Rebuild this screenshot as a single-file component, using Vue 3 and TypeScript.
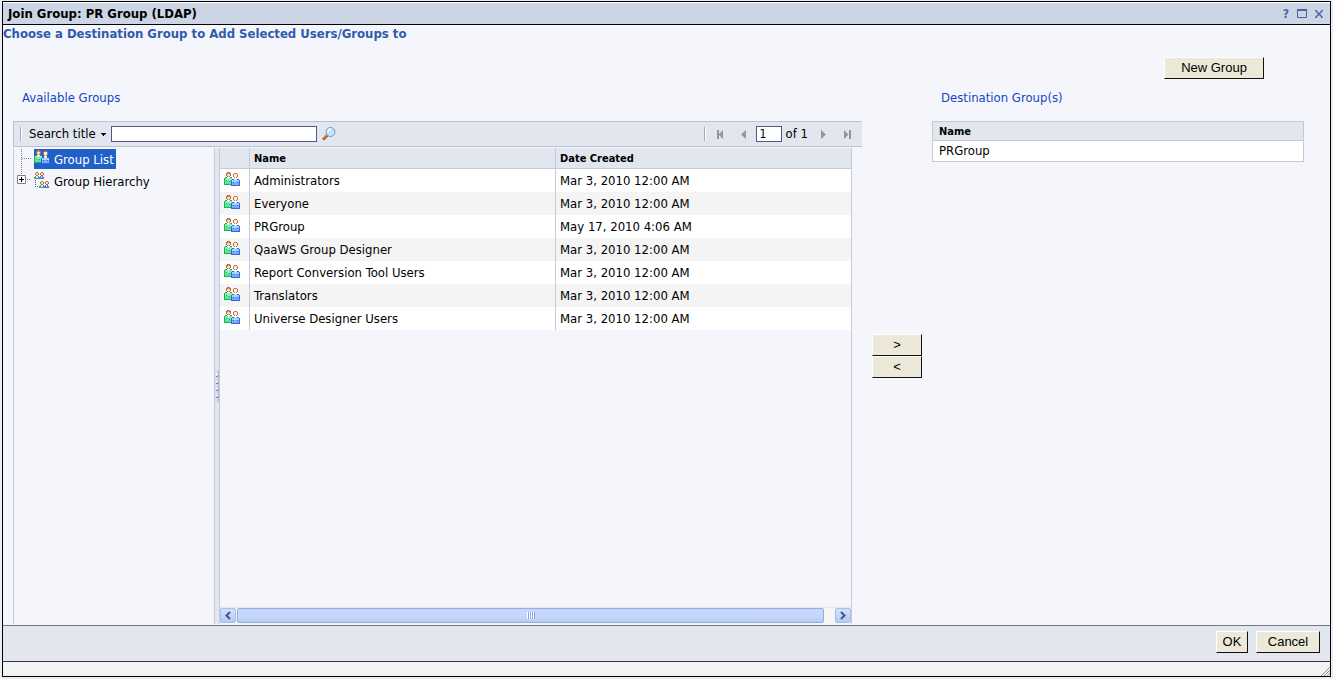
<script setup lang="ts">
import { ref } from 'vue'

interface GroupRow {
  name: string
  created: string
}

const groups: GroupRow[] = [
  { name: 'Administrators', created: 'Mar 3, 2010 12:00 AM' },
  { name: 'Everyone', created: 'Mar 3, 2010 12:00 AM' },
  { name: 'PRGroup', created: 'May 17, 2010 4:06 AM' },
  { name: 'QaaWS Group Designer', created: 'Mar 3, 2010 12:00 AM' },
  { name: 'Report Conversion Tool Users', created: 'Mar 3, 2010 12:00 AM' },
  { name: 'Translators', created: 'Mar 3, 2010 12:00 AM' },
  { name: 'Universe Designer Users', created: 'Mar 3, 2010 12:00 AM' },
]
const destinations = ref<string[]>(['PRGroup'])
const search = ref('')
const page = ref('1')
</script>

<template>
  <div class="screen">
    <svg class="sprites" width="0" height="0" aria-hidden="true">
      <symbol id="people" viewBox="0 0 16 14">
        <g shape-rendering="crispEdges">
          <path d="M1 6h7v7h-8v-6h1z" fill="#8cecb4" />
          <path d="M1 9h6v3h-6z" fill="#66e096" />
          <path d="M1 5h2v1h-2zM6 5h2v1h-2zM0 6h1v7h-1zM0 12h8v1h-8zM5 9h1v1h-1zM2 8h1v1h-1z" fill="#18b25a" />
          <path d="M3 5h3v1h-1v1h-1v-1h-1z" fill="#fff" />
          <path d="M3 0h3v1h1v3h-1v1h-3v-1h-1v-3h1z" fill="#bd6a48" />
          <path d="M3 2h3v2h-1v1h-1v-1h-1z" fill="#fbd3bd" />
          <path d="M4 1h1v1h-1z" fill="#f0b08e" />
          <path d="M8 7h7v1h1v6h-9v-6h1z" fill="#a9d2ff" />
          <path d="M8 10h7v3h-7z" fill="#74adfb" />
          <path d="M8 7h2v1h-2zM13 7h2v1h-2zM7 8h1v6h-1zM15 8h1v6h-1zM7 13h9v1h-9zM9 10h1v1h-1zM13 10h1v1h-1z" fill="#3765e0" />
          <path d="M10 6h3v1h-1v1h-1v-1h-1z" fill="#fff" />
          <path d="M10 1h3v1h1v3h-1v1h-3v-1h-1v-3h1z" fill="#c4714c" />
          <path d="M10 2h3v3h-1v1h-1v-1h-1z" fill="#fdeadb" />
        </g>
      </symbol>
      <symbol id="hierarchy" viewBox="0 0 16 16">
        <g shape-rendering="crispEdges">
          <g id="pair">
            <path d="M2 0h2v1h1v2h-1v1h-2v-1h-1v-2h1zM7 0h2v1h1v2h-1v1h-2v-1h-1v-2h1z" fill="#c06a48" />
            <path d="M2 1h2v2h-2zM7 1h2v2h-2z" fill="#fbdccb" />
            <path d="M1 4h4v1h1v2h-6v-2h1z" fill="#4f9f7c" />
            <path d="M6 4h3v1h1v2h-5v-2h1z" fill="#4a78e0" />
            <path d="M2 4h2v2h-2z" fill="#d3f3de" />
            <path d="M7 4h1v2h-1z" fill="#d4e6ff" />
          </g>
          <use href="#pair" x="5" y="9" />
          <path d="M1 8h1v1h-1zM1 10h1v1h-1zM1 12h1v1h-1zM1 14h1v1h-1zM3 14h1v1h-1z" fill="#3b5fa8" />
        </g>
      </symbol>
    </svg>

    <section class="dialog" role="dialog" aria-labelledby="dialog-title">
      <header class="titlebar">
        <h1 id="dialog-title">Join Group: PR Group (LDAP)</h1>
        <button class="tool" type="button" aria-label="Help">?</button>
        <button class="tool" type="button" aria-label="Maximize">
          <svg width="10" height="9"><path d="M0.500 1v7.500h9v-7.500" fill="none" stroke="#4b62a5" /><path d="M0 1h10" stroke="#4b62a5" stroke-width="2" /></svg>
        </button>
        <button class="tool" type="button" aria-label="Close">
          <svg width="8" height="8"><path d="M1 1l6 6M7 1l-6 6" stroke="#4b62a5" stroke-width="1.500" /><path d="M0 .5h2M6 .5h2M0 7.500h2M6 7.500h2" stroke="#4b62a5" /></svg>
        </button>
      </header>

      <main class="content">
        <h2>Choose a Destination Group to Add Selected Users/Groups to</h2>
        <div class="columns">
          <section class="available">
            <h3>Available Groups</h3>
            <div class="toolbar">
              <span class="grip"></span>
              <button class="search-by" type="button">Search title
                <svg width="5" height="3"><path d="M0 0h5v1h-1v1h-1v1h-1v-1h-1v-1h-1z" /></svg>
              </button>
              <input v-model="search" class="search" type="text" aria-label="Search title" />
              <button class="go" type="button" aria-label="Search">
                <svg width="14" height="14">
                  <path d="M1 12.500l4.500-4.500" stroke="#a85a22" stroke-width="3" />
                  <path d="M1 11.500l4-4" stroke="#f2b26a" stroke-width="1" />
                  <circle cx="8.500" cy="5" r="4.500" fill="#bfe6ff" stroke="#7793c8" />
                  <path d="M6 5.500a3 3 0 0 1 3-3.500" stroke="#fff" stroke-width="1.500" fill="none" />
                </svg>
              </button>
              <span class="grip push"></span>
              <button class="nav first" type="button" aria-label="First page">
                <svg width="7" height="9"><path d="M0 0h2v9h-2zM6 0v9l-4.500-4.500z" /></svg>
              </button>
              <button class="nav prev" type="button" aria-label="Previous page">
                <svg width="5" height="9"><path d="M5 0v9l-5-4.500z" /></svg>
              </button>
              <input id="page" v-model="page" class="page" type="text" />
              <label class="of" for="page">of 1</label>
              <button class="nav next" type="button" aria-label="Next page">
                <svg width="5" height="9"><path d="M0 0v9l5-4.500z" /></svg>
              </button>
              <button class="nav last" type="button" aria-label="Last page">
                <svg width="7" height="9"><path d="M0 0v9l4.500-4.500zM5 0h2v9h-2z" /></svg>
              </button>
            </div>

            <div class="panes">
              <ul class="tree">
                <li>
                  <span class="branch">
                    <svg width="20" height="22"><path d="M7.500 0v22M8 9.500h9" fill="none" stroke="#808080" stroke-dasharray="1 1" /></svg>
                  </span>
                  <a class="node selected" href="#list"><svg width="16" height="14"><use href="#people" /></svg><span>Group List</span></a>
                </li>
                <li>
                  <button class="branch" type="button" aria-label="Expand Group Hierarchy">
                    <svg width="20" height="22"><path d="M7.500 0v5M13 8.500h4" stroke="#808080" stroke-dasharray="1 1" /><path d="M3.500 4.500h8v8h-8z" fill="#fff" stroke="#808080" /><path d="M5 8.500h5M7.500 6v5" stroke="#000" /></svg>
                  </button>
                  <a class="node" href="#hierarchy-view"><svg width="16" height="16"><use href="#hierarchy" /></svg><span>Group Hierarchy</span></a>
                </li>
              </ul>
              <div class="splitter">
                <svg width="4" height="32"><path d="M0 0h3v32h-3z" fill="#d3ddec" /><path d="M3 0h1v32h-1z" fill="#b4bdd3" /><path d="M1 5h2M1 12h2M1 19h2M1 26h2" stroke="#fff" stroke-width="2" /><path d="M1 6.500h2M2 5.500h1M1 13.500h2M2 12.500h1M1 20.500h2M2 19.500h1M1 27.500h2M2 26.500h1" stroke="#7888a8" /></svg>
              </div>
              <div class="list">
                <table class="groups">
                  <thead>
                    <tr><th class="c-icon"></th><th class="c-name">Name</th><th>Date Created</th></tr>
                  </thead>
                  <tbody>
                    <tr v-for="g in groups" :key="g.name">
                      <td class="c-icon"><svg width="16" height="14"><use href="#people" /></svg></td>
                      <td>{{ g.name }}</td>
                      <td>{{ g.created }}</td>
                    </tr>
                  </tbody>
                </table>
                <div class="hscroll">
                  <button type="button" aria-label="Scroll left"><svg width="6" height="9"><path d="M5 1l-3.500 3.500 3.500 3.500" fill="none" stroke="#44597f" stroke-width="2" /></svg></button>
                  <div class="thumb"><i></i><i></i><i></i><i></i></div>
                  <button type="button" aria-label="Scroll right"><svg width="6" height="9"><path d="M1 1l3.500 3.500-3.500 3.500" fill="none" stroke="#44597f" stroke-width="2" /></svg></button>
                </div>
              </div>
            </div>
          </section>

          <div class="movers">
            <button class="btn" type="button" aria-label="Add">&gt;</button>
            <button class="btn" type="button" aria-label="Remove">&lt;</button>
          </div>

          <section class="destination">
            <button class="btn new-group" type="button">New Group</button>
            <h3>Destination Group(s)</h3>
            <table class="dest">
              <thead><tr><th>Name</th></tr></thead>
              <tbody><tr v-for="d in destinations" :key="d"><td>{{ d }}</td></tr></tbody>
            </table>
          </section>
        </div>
      </main>

      <footer class="actions">
        <button class="btn ok" type="button">OK</button>
        <button class="btn cancel" type="button">Cancel</button>
      </footer>
      <div class="status">
        <svg width="9" height="9"><path d="M0 9l9-9M3 9l6-6M6 9l3-3" stroke="#8f8f8f" /></svg>
      </div>
    </section>
  </div>
</template>

<style>
body {
  background: #e9eef5;
}
</style>

<style scoped>
* {
  box-sizing: border-box;
}
.screen {
  height: 100vh;
  padding: 1px 2px 2px;
  font: 13px/18px "DejaVu Sans Condensed", "Noto Sans", sans-serif;
  color: #000;
}
.sprites {
  position: absolute;
}
svg {
  display: block;
}
button {
  font: inherit;
  color: inherit;
  padding: 0;
  border: 0;
  background: none;
}
h1,
h2,
h3 {
  margin: 0;
  font-size: 13px;
  line-height: 18px;
}
.dialog {
  height: 100%;
  display: flex;
  flex-direction: column;
  border: 1px solid #000;
  background: #f4f6fb;
}
.titlebar {
  height: 23px;
  flex: none;
  display: flex;
  align-items: center;
  gap: 8px;
  padding: 0 7px 0 5px;
  background: #cbd5e3;
  border-top: 1px solid #fff;
  border-bottom: 1px solid #000;
}
h1 {
  flex: 1;
}
.tool {
  color: #4b62a5;
  font-weight: bold;
  font-size: 12px;
}
.content {
  flex: 1;
  min-height: 0;
  display: flex;
  flex-direction: column;
}
h2 {
  color: #2f5bab;
}
h3 {
  padding-left: 9px;
  margin-bottom: 14px;
  font-weight: normal;
  color: #1545c8;
}
.columns {
  flex: 1;
  min-height: 0;
  display: flex;
  padding: 0 26px 0 10px;
}
.available {
  flex: 1;
  min-width: 0;
  display: flex;
  flex-direction: column;
  padding-top: 46px;
}
.toolbar {
  height: 26px;
  flex: none;
  display: flex;
  align-items: center;
  padding: 0 11px 0 6px;
  background: #e2e7ef;
  border: 1px solid #bcc0d4;
  border-right: 0;
}
.grip {
  width: 2px;
  height: 14px;
  background: #9ba5c6;
  border-right: 1px solid #fff;
}
.push {
  margin-left: auto;
}
.search-by {
  display: flex;
  align-items: center;
  gap: 5px;
  margin: 0 5px 0 7px;
}
.search,
.page {
  height: 16px;
  padding: 0 3px;
  font: inherit;
  font-size: 12px;
  line-height: 14px;
  background: #fff;
  border: 1px solid #545680;
  border-radius: 0;
}
.search {
  width: 206px;
}
.go {
  margin-left: 5px;
}
.page {
  width: 26px;
  margin-left: 10px;
}
.of {
  margin: 0 13px 0 4px;
}
.nav {
  fill: #969696;
}
.first {
  margin: 0 17px 0 11px;
}
.last {
  margin-left: 18px;
}
.panes {
  flex: 1;
  min-height: 0;
  display: flex;
  padding: 1px 10px 1px 0;
}
.tree {
  width: 202px;
  margin: 0;
  padding: 0;
  list-style: none;
  border-left: 1px solid #c8c9d6;
  border-right: 1px solid #c8c9d6;
}
.tree li {
  display: flex;
  align-items: flex-start;
  height: 22px;
}
.branch {
  width: 20px;
  margin-top: 1px;
}
.node {
  display: flex;
  align-items: flex-start;
  height: 20px;
  margin-top: 1px;
  padding-right: 2px;
  color: inherit;
  text-decoration: none;
}
.node svg {
  margin: 1px 4px 0 0;
}
.node span {
  margin-top: 2px;
}
.selected {
  background: #2061c9;
  color: #fff;
}
.splitter {
  width: 4px;
  display: flex;
  align-items: center;
  background: #e2e7ef;
}
.list {
  flex: 1;
  min-width: 0;
  display: flex;
  flex-direction: column;
  justify-content: space-between;
  border: solid #c8c9d9;
  border-width: 0 1px;
}
table {
  width: 100%;
  border-collapse: separate;
  border-spacing: 0;
  table-layout: fixed;
}
th,
td {
  padding: 0 4px;
  text-align: left;
}
th {
  font-size: 11px;
}
.groups th {
  height: 21px;
  padding-top: 2px;
  background: #e2e7ef;
  border-bottom: 1px solid #c8c9d9;
}
.groups td {
  height: 23px;
  padding-top: 1px;
}
.groups th + th,
.groups td + td {
  border-left: 1px solid #c8c9d9;
}
.groups tbody tr {
  background: #fff;
}
.groups tbody tr:nth-child(even) {
  background: #f4f4f4;
}
.c-icon {
  width: 29px;
}
td.c-icon svg {
  margin-top: -4px;
}
.c-name {
  width: 306px;
}
.hscroll {
  height: 17px;
  flex: none;
  display: flex;
  gap: 1px;
  background: #f7f6f2;
  border-top: 1px solid #ece9df;
}
.hscroll button {
  width: 16px;
  height: 15px;
  display: grid;
  place-items: center;
  background: linear-gradient(#d3e0fd, #b3caf6);
  border: 1px solid #a4bfeb;
  border-radius: 2px;
}
.thumb {
  flex: 1;
  height: 15px;
  margin-right: 10px;
  display: flex;
  align-items: center;
  justify-content: center;
  background: linear-gradient(#c6d6fd 60%, #b7cbf8);
  border: 1px solid #90aede;
  border-radius: 2px;
}
.thumb i {
  width: 2px;
  height: 7px;
  background: #8ba5df;
  border-left: 1px solid #fff;
}
.movers {
  width: 70px;
  flex: none;
  display: flex;
  flex-direction: column;
  align-items: center;
  justify-content: center;
  padding-top: 44px;
}
.movers .btn {
  width: 50px;
}
.btn {
  height: 22px;
  font: 13px/18px "Liberation Sans", Arial, sans-serif;
  background: #ece9d8;
  border: 1px solid #fff;
  border-right-color: #111;
  border-bottom-color: #111;
}
.destination {
  width: 372px;
  flex: none;
  display: flex;
  flex-direction: column;
  padding-top: 14px;
}
.new-group {
  width: 100px;
  align-self: flex-end;
  margin: 0 40px 10px 0;
}
.dest {
  background: #fff;
  border: 1px solid #c8c9d6;
}
.dest th {
  height: 19px;
  padding-top: 2px;
  background: #e2e7ef;
  border-bottom: 1px solid #c8c9d6;
}
.dest td {
  height: 20px;
}
.dest th,
.dest td {
  padding-left: 6px;
}
.dest th {
  line-height: 16px;
}
.actions {
  height: 36px;
  flex: none;
  display: flex;
  justify-content: flex-end;
  gap: 8px;
  padding: 5px 10px 0;
  background: #e2e7ef;
  border-top: 1px solid #77777f;
}
.ok {
  width: 32px;
}
.cancel {
  width: 64px;
}
.status {
  height: 15px;
  flex: none;
  display: flex;
  align-items: flex-end;
  justify-content: flex-end;
  background: #f3f3f3;
  border-top: 1px solid #35353b;
}
</style>
